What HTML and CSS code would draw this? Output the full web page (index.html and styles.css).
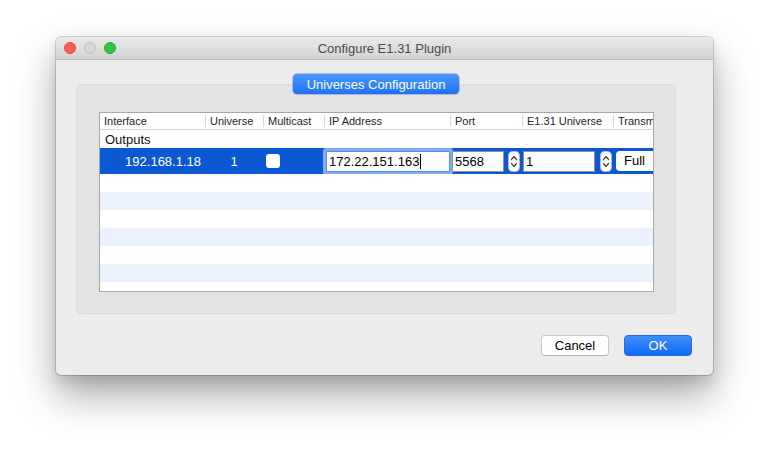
FILE: index.html
```html
<!DOCTYPE html>
<html>
<head>
<meta charset="utf-8">
<link rel="stylesheet" href="styles.css">
</head>
<body>
<div class="stage">
  <div class="window">
    <div class="titlebar">
      <div class="lights">
        <span class="light red"></span>
        <span class="light gray"></span>
        <span class="light green"></span>
      </div>
      <div class="title">Configure E1.31 Plugin</div>
      <div></div>
    </div>
    <div class="content">
      <div class="group-wrap">
        <div class="tab">Universes Configuration</div>
        <div class="group">
          <div class="table">
            <div class="thead">
              <div class="th c-if">Interface</div>
              <div class="th c-un">Universe</div>
              <div class="th c-mc">Multicast</div>
              <div class="th c-ip">IP Address</div>
              <div class="th c-port">Port</div>
              <div class="th c-e131">E1.31 Universe</div>
              <div class="th c-tx">Transmission Mode</div>
            </div>
            <div class="tbody">
              <div class="row group-row">Outputs</div>
              <div class="row selected">
                <div class="cell c-if right">192.168.1.18</div>
                <div class="cell c-un center">1</div>
                <div class="cell c-mc"><span class="checkbox"></span></div>
                <div class="field ip-field"><span class="caret">172.22.151.163</span></div>
                <div class="field port-field">5568</div>
                <svg class="stepper step-a" width="12" height="21" viewBox="0 0 12 21"><rect x="0.5" y="0.5" width="11" height="20" rx="4" fill="#fff" stroke="#b9b9b9"/><path d="M3.5 8.5 L6 5.5 L8.5 8.5" fill="none" stroke="#444" stroke-width="1.2" stroke-linecap="round" stroke-linejoin="round"/><path d="M3.5 12.5 L6 15.5 L8.5 12.5" fill="none" stroke="#444" stroke-width="1.2" stroke-linecap="round" stroke-linejoin="round"/></svg>
                <div class="field e131-field">1</div>
                <svg class="stepper step-b" width="12" height="21" viewBox="0 0 12 21"><rect x="0.5" y="0.5" width="11" height="20" rx="4" fill="#fff" stroke="#b9b9b9"/><path d="M3.5 8.5 L6 5.5 L8.5 8.5" fill="none" stroke="#444" stroke-width="1.2" stroke-linecap="round" stroke-linejoin="round"/><path d="M3.5 12.5 L6 15.5 L8.5 12.5" fill="none" stroke="#444" stroke-width="1.2" stroke-linecap="round" stroke-linejoin="round"/></svg>
                <div class="popup">Full</div>
              </div>
              <div class="row"></div>
              <div class="row alt"></div>
              <div class="row"></div>
              <div class="row alt"></div>
              <div class="row"></div>
              <div class="row alt"></div>
              <div class="row"></div>
            </div>
          </div>
        </div>
      </div>
    </div>
    <div class="actions">
      <button class="btn cancel">Cancel</button>
      <button class="btn ok">OK</button>
    </div>
  </div>
</div>
</body>
</html>
```
FILE: styles.css
```css
* { box-sizing: border-box; }
html, body { height: 100%; }
body {
  margin: 0;
  background: #fff;
  font-family: "Liberation Sans", Arial, sans-serif;
  color: #000;
  overflow: hidden;
}
.stage {
  height: 449px;
  padding: 37px 0 0 56px;
}
.window {
  width: 657px;
  height: 338px;
  background: #ececec;
  border-radius: 5px;
  box-shadow: 0 0 0 1px rgba(0,0,0,0.16), 0 20px 40px rgba(0,0,0,0.34), 0 8px 14px rgba(0,0,0,0.10);
  display: flex;
  flex-direction: column;
  overflow: hidden;
}
.titlebar {
  height: 23px;
  border-bottom: 1px solid #b8b8b8;
  background: linear-gradient(#e9e9e9, #d4d4d4);
  display: grid;
  grid-template-columns: 1fr auto 1fr;
  align-items: center;
}
.lights { display: flex; gap: 8px; padding-left: 8px; }
.light {
  width: 12px; height: 12px; border-radius: 50%;
  display: block;
}
.red { background: #fc5b57; border: 1px solid #e0443e; }
.gray { background: #d6d6d6; border: 1px solid #c2c2c2; }
.green { background: #2fc840; border: 1px solid #24a533; }
.title { font-size: 13px; color: #4b4b4b; }

.content { padding: 14px 37px 0 20px; }
.group-wrap { position: relative; padding-top: 10px; }
.tab {
  position: absolute;
  top: 0; left: 50%;
  transform: translateX(-50%);
  width: 166px; height: 20px;
  border-radius: 4px;
  background: linear-gradient(#4b98fa, #1f72f5);
  box-shadow: 0 0 0 0.5px rgba(0,60,200,0.5);
  color: #fff;
  font-size: 13px;
  display: flex; align-items: center; justify-content: center;
  z-index: 1;
}
.group {
  height: 230px;
  background: #e3e3e3;
  border: 1px solid #dadada;
  border-radius: 5px;
  padding: 27px 21px 0 22px;
}
.table {
  height: 180px;
  border: 1px solid #a8a8a8;
  background: #fff;
  overflow: hidden;
  display: flex;
  flex-direction: column;
}
.thead {
  height: 17px;
  border-bottom: 1px solid #d6d6d6;
  display: flex;
  align-items: center;
  flex: none;
  white-space: nowrap;
  overflow: hidden;
}
.th {
  height: 12px;
  line-height: 12px;
  font-size: 11px;
  color: #262626;
  padding-left: 4px;
  border-left: 1px solid #d9d9d9;
  overflow: hidden;
  flex: none;
}
.th.c-if { border-left: none; }
.c-if { width: 105px; }
.c-un { width: 58px; }
.c-mc { width: 61px; }
.c-ip { width: 126px; }
.c-port { width: 72px; }
.c-e131 { width: 91px; }
.c-tx { width: 40px; }

.tbody { flex: 1; overflow: hidden; }
.row { height: 18px; }
.row.alt { background: #ebf1fd; }
.group-row {
  font-size: 13px;
  line-height: 19px;
  padding-left: 5px;
  color: #111;
}
.row.selected {
  height: 26px;
  background: #0b59d2;
  display: flex;
  align-items: center;
  white-space: nowrap;
  overflow: hidden;
}
.cell { flex: none; font-size: 13px; color: #fff; }
.right { text-align: right; padding-right: 4px; }
.center { text-align: center; }
.checkbox {
  display: block;
  width: 14px; height: 14px;
  margin-left: 3px;
  background: #fff;
  border-radius: 3px;
}
.field {
  flex: none;
  height: 21px;
  background: #fff;
  border: 1px solid #8e8e8e;
  font-size: 13px;
  line-height: 19px;
  padding-left: 2px;
  color: #000;
}
.ip-field {
  width: 124px;
  margin-left: 2px;
  border-color: #5a8fe0;
  box-shadow: 0 0 0 3px #7eaef2;
  border-radius: 1px;
}
.caret { border-right: 1px solid #000; padding-right: 1px; }
.port-field { width: 52px; margin-left: 2px; }
.e131-field { width: 72px; margin-left: 3px; }
.stepper { flex: none; display: block; }
.step-a { margin-left: 4px; }
.step-b { margin-left: 5px; }
.popup {
  flex: none;
  margin-left: 4px;
  width: 50px;
  height: 20px;
  background: #fff;
  border-radius: 4px;
  font-size: 13px;
  line-height: 20px;
  padding-left: 8px;
  color: #000;
}

.actions {
  display: flex;
  justify-content: flex-end;
  gap: 15px;
  padding: 21px 21px 0 0;
}
.btn {
  width: 68px;
  height: 21px;
  border-radius: 4px;
  font-family: "Liberation Sans", Arial, sans-serif;
  font-size: 13px;
  padding: 0;
  display: flex; align-items: center; justify-content: center;
}
.cancel {
  background: #fff;
  border: 1px solid #c6c6c6;
  border-bottom-color: #b0b0b0;
  color: #000;
}
.ok {
  background: linear-gradient(#3e8ef9, #106bf5);
  border: 1px solid #1f6ee8;
  color: #fff;
}
```
